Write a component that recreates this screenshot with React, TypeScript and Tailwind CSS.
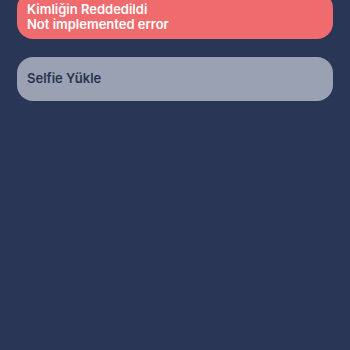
export default function App() {
  return (
    <div className="w-[350px] h-[350px] overflow-hidden bg-[#293655] px-[17px]" style={{ fontFamily: 'Inter, "Noto Sans", sans-serif' }}>
      <div className="-mt-[8px] rounded-[16px] bg-[#ef6b6e] px-[10px] pt-[10px] pb-[7px] text-[13px] leading-[15px] font-semibold text-white">
        <div>Kimliğin Reddedildi</div>
        <div>Not implemented error</div>
      </div>
      <div className="mt-[18px] h-[44px] rounded-[16px] bg-[#9aa1b2] px-[10px] flex items-center text-[13px] font-semibold text-[#27334f]">
        Selfie Yükle
      </div>
    </div>
  );
}
